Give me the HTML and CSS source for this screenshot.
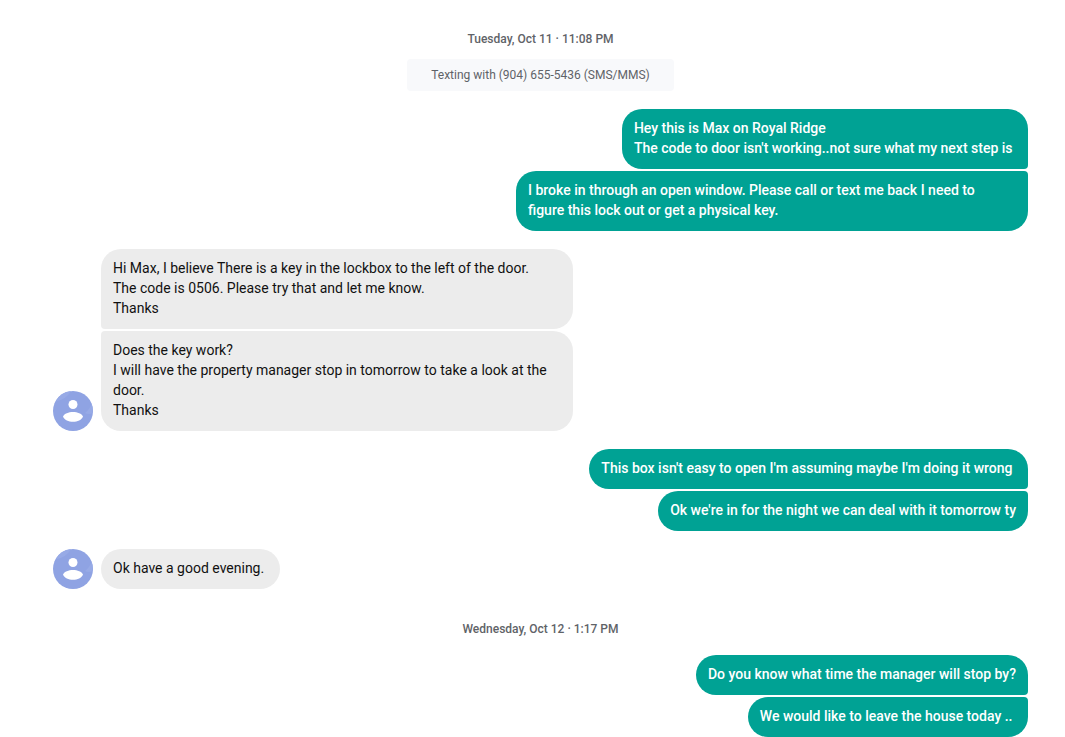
FILE: index.html
```html
<!DOCTYPE html>
<html lang="en">
<head>
<meta charset="utf-8">
<meta name="viewport" content="width=device-width, initial-scale=1">
<title>Conversation</title>
<link rel="stylesheet" href="styles.css">
</head>
<body>
<svg class="sprite" aria-hidden="true">
  <symbol id="person" viewBox="0 0 40 40">
    <circle cx="20" cy="20" r="20" fill="#8fa3e3"/>
    <path d="M2.500 10.500A20 20 0 0 1 18 .1Q13 9 2.500 10.500ZM32 22Q37 18 38.500 12.500A20 20 0 0 1 39.500 22Q36 24 32 22Z" fill="#97aae6"/>
    <circle cx="20" cy="13.500" r="4.500" fill="#fff"/>
    <path d="M10 25.500C12.500 19.500 27.500 19.500 30 25.500C27.500 32.500 12.500 32.500 10 25.500Z" fill="#fff"/>
  </symbol>
</svg>
<main class="conversation">
  <time class="timestamp">Tuesday, Oct 11 · 11:08 PM</time>
  <p class="notice">Texting with (904) 655-5436 (SMS/MMS)</p>

  <section class="group sent">
    <p class="bubble">Hey this is Max on Royal Ridge
The code to door isn't working..not sure what my next step is </p>
    <p class="bubble">I broke in through an open window. Please call or text me back I need to figure this lock out or get a physical key.</p>
  </section>

  <section class="group received">
    <svg class="avatar" role="img" aria-label="Contact"><use href="#person"/></svg>
    <div class="stack">
      <p class="bubble">Hi Max, I believe There is a key in the lockbox to the left of the door.
The code is 0506. Please try that and let me know.
Thanks</p>
      <p class="bubble">Does the key work?
I will have the property manager stop in tomorrow to take a look at the door.
Thanks</p>
    </div>
  </section>

  <section class="group sent">
    <p class="bubble">This box isn't easy to open I'm assuming maybe I'm doing it wrong </p>
    <p class="bubble">Ok we're in for the night we can deal with it tomorrow ty</p>
  </section>

  <section class="group received">
    <svg class="avatar" role="img" aria-label="Contact"><use href="#person"/></svg>
    <div class="stack">
      <p class="bubble">Ok have a good evening. </p>
    </div>
  </section>

  <time class="timestamp later">Wednesday, Oct 12 · 1:17 PM</time>

  <section class="group sent">
    <p class="bubble">Do you know what time the manager will stop by?</p>
    <p class="bubble">We would like to leave the house today .. </p>
  </section>
</main>
</body>
</html>
```

FILE: styles.css
```css
* {
  box-sizing: border-box;
}

body {
  margin: 0;
  background: #fff;
  font-family: Roboto, "Liberation Sans", sans-serif;
  font-size: 14px;
  line-height: 20px;
}

p {
  margin: 0;
}

.sprite {
  position: absolute;
  width: 0;
  height: 0;
}

.conversation {
  display: flex;
  flex-direction: column;
  padding: 29px 37px 0 53px;
}

.timestamp,
.notice {
  align-self: center;
  font-size: 12px;
  color: #5f6368;
}

.timestamp {
  font-weight: 500;
}

.notice {
  margin-top: 10px;
  padding: 6px 24px;
  border-radius: 4px;
  background: #f8f9fb;
}

.group {
  display: flex;
  margin-top: 18px;
}

.sent,
.stack {
  display: flex;
  flex-direction: column;
  gap: 2px;
}

.sent {
  align-items: flex-end;
}

.received {
  align-items: flex-end;
  gap: 8px;
}

.stack {
  align-items: stretch;
  max-width: 472px;
}

.avatar {
  flex: none;
  width: 40px;
  height: 40px;
}

.bubble {
  max-width: 512px;
  padding: 9px 12px 11px;
  border-radius: 20px;
  white-space: break-spaces;
}

.sent .bubble {
  background: #00a294;
  color: #fff;
  font-weight: 500;
}

.received .bubble {
  background: #ececec;
  color: #111;
}

.sent .bubble:not(:last-child) {
  border-bottom-right-radius: 4px;
}

.sent .bubble:not(:first-child) {
  border-top-right-radius: 4px;
}

.received .bubble:not(:last-child) {
  border-bottom-left-radius: 4px;
}

.received .bubble:not(:first-child) {
  border-top-left-radius: 4px;
}

.later {
  margin-top: 30px;
}

.later + .group {
  margin-top: 16px;
}
```
